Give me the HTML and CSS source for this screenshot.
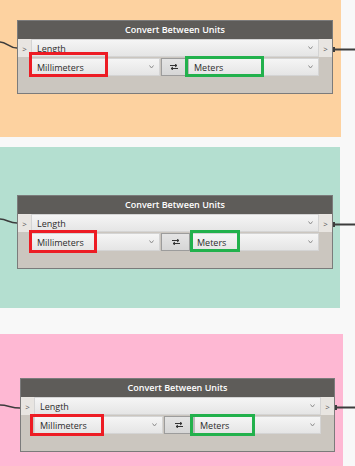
FILE: index.html
```html
<!DOCTYPE html>
<html lang="en">
<head>
    <meta charset="UTF-8">
    <meta name="viewport" content="width=device-width, initial-scale=1.0">
    <title>Convert Between Units</title>
    <link rel="stylesheet" href="styles.css">
</head>
<body>
    <div class="panel panel-orange">
        <div class="canvas">
            <svg class="wire-in" width="17" height="40" viewBox="0 0 17 40"><path d="M0 22 C7 22 9 28 17 28" fill="none" stroke="#3c3c3c" stroke-width="1.6"/></svg>
            <div class="node">
                <div class="node-title">Convert Between Units</div>
                <div class="node-row">
                    <span class="port">&gt;</span>
                    <div class="combo combo-wide"><span>Length</span><svg class="caret" width="5" height="4" viewBox="0 0 5 4"><path d="M0.5 0.5 L2.5 3 L4.5 0.5" fill="none" stroke="#8c8c8c"/></svg></div>
                    <span class="port">&gt;</span>
                </div>
                <div class="node-row units">
                    <div class="combo combo-from"><span>Millimeters</span><svg class="caret" width="5" height="4" viewBox="0 0 5 4"><path d="M0.5 0.5 L2.5 3 L4.5 0.5" fill="none" stroke="#8c8c8c"/></svg></div>
                    <div class="swap"><svg width="8" height="6" viewBox="0 0 8 6"><path d="M0 1.5 H7 M5 0 L7 1.5 L5 3 M8 4.5 H1 M3 3 L1 4.5 L3 6" fill="none" stroke="#333" stroke-width="1"/></svg></div>
                    <div class="combo combo-to"><span>Meters</span><svg class="caret" width="5" height="4" viewBox="0 0 5 4"><path d="M0.5 0.5 L2.5 3 L4.5 0.5" fill="none" stroke="#8c8c8c"/></svg></div>
                </div>
                <span class="mark mark-red m1-red"></span>
                <span class="mark mark-green m1-green"></span>
            </div>
            <svg class="wire-out" width="22" height="40" viewBox="0 0 22 40"><rect x="0" y="27" width="2" height="5" fill="#3c3c3c"/><path d="M0 29.5 H22" stroke="#3c3c3c" stroke-width="2"/></svg>
        </div>
    </div>

    <div class="panel panel-green">
        <div class="canvas">
            <svg class="wire-in" width="17" height="40" viewBox="0 0 17 40"><path d="M0 24 C7 24 9 28 17 28" fill="none" stroke="#3c3c3c" stroke-width="1.6"/></svg>
            <div class="node">
                <div class="node-title">Convert Between Units</div>
                <div class="node-row">
                    <span class="port">&gt;</span>
                    <div class="combo combo-wide"><span>Length</span><svg class="caret" width="5" height="4" viewBox="0 0 5 4"><path d="M0.5 0.5 L2.5 3 L4.5 0.5" fill="none" stroke="#8c8c8c"/></svg></div>
                    <span class="port">&gt;</span>
                </div>
                <div class="node-row units">
                    <div class="combo combo-from"><span>Millimeters</span><svg class="caret" width="5" height="4" viewBox="0 0 5 4"><path d="M0.5 0.5 L2.5 3 L4.5 0.5" fill="none" stroke="#8c8c8c"/></svg></div>
                    <div class="swap swap-wide"><svg width="8" height="6" viewBox="0 0 8 6"><path d="M0 1.5 H7 M5 0 L7 1.5 L5 3 M8 4.5 H1 M3 3 L1 4.5 L3 6" fill="none" stroke="#333" stroke-width="1"/></svg></div>
                    <div class="combo combo-to"><span>Meters</span><svg class="caret" width="5" height="4" viewBox="0 0 5 4"><path d="M0.5 0.5 L2.5 3 L4.5 0.5" fill="none" stroke="#8c8c8c"/></svg></div>
                </div>
                <span class="mark mark-red m2-red"></span>
                <span class="mark mark-green m2-green"></span>
            </div>
            <svg class="wire-out" width="22" height="40" viewBox="0 0 22 40"><rect x="0" y="27" width="2" height="5" fill="#3c3c3c"/><path d="M0 29.5 H22" stroke="#3c3c3c" stroke-width="2"/></svg>
        </div>
    </div>

    <div class="panel panel-pink">
        <div class="canvas">
            <svg class="wire-in wide" width="20" height="40" viewBox="0 0 20 40"><path d="M0 27 C8 27 11 30 20 30" fill="none" stroke="#3c3c3c" stroke-width="1.6"/></svg>
            <div class="node node-narrow">
                <div class="node-title">Convert Between Units</div>
                <div class="node-row">
                    <span class="port">&gt;</span>
                    <div class="combo combo-wide"><span>Length</span><svg class="caret" width="5" height="4" viewBox="0 0 5 4"><path d="M0.5 0.5 L2.5 3 L4.5 0.5" fill="none" stroke="#8c8c8c"/></svg></div>
                    <span class="port">&gt;</span>
                </div>
                <div class="node-row units">
                    <div class="combo combo-from"><span>Millimeters</span><svg class="caret" width="5" height="4" viewBox="0 0 5 4"><path d="M0.5 0.5 L2.5 3 L4.5 0.5" fill="none" stroke="#8c8c8c"/></svg></div>
                    <div class="swap swap-wide"><svg width="8" height="6" viewBox="0 0 8 6"><path d="M0 1.5 H7 M5 0 L7 1.5 L5 3 M8 4.5 H1 M3 3 L1 4.5 L3 6" fill="none" stroke="#333" stroke-width="1"/></svg></div>
                    <div class="combo combo-to"><span>Meters</span><svg class="caret" width="5" height="4" viewBox="0 0 5 4"><path d="M0.5 0.5 L2.5 3 L4.5 0.5" fill="none" stroke="#8c8c8c"/></svg></div>
                </div>
                <span class="mark mark-red m3-red"></span>
                <span class="mark mark-green m3-green"></span>
            </div>
            <svg class="wire-out" width="20" height="40" viewBox="0 0 20 40"><rect x="0" y="27" width="2" height="5" fill="#3c3c3c"/><path d="M0 29.5 H20" stroke="#3c3c3c" stroke-width="2"/></svg>
        </div>
    </div>
</body>
</html>
```

FILE: styles.css
```css
body {
    margin: 0;
    background: #f8f8f8;
    font-family: "Open Sans", "DejaVu Sans", sans-serif;
    overflow: hidden;
}
.panel {
    box-sizing: border-box;
}
.panel-orange {
    width: 341px;
    height: 137px;
    padding-top: 20px;
    margin-bottom: 10px;
    background: #fdd2a0;
}
.panel-green {
    width: 340px;
    height: 161px;
    padding-top: 48px;
    margin-bottom: 26px;
    background: #b4dfd0;
}
.panel-pink {
    width: 343px;
    height: 132px;
    padding-top: 44px;
    background: #feb8d3;
}
.canvas {
    display: flex;
    align-items: flex-start;
    width: 355px;
}
.wire-in, .wire-out {
    flex: none;
    display: block;
}
.node {
    position: relative;
    flex: none;
    box-sizing: border-box;
    width: 316px;
    height: 74px;
    border: 1px solid #7b7b7b;
    background: #cbc6bf;
}
.node-narrow {
    width: 315px;
}
.node-title {
    height: 18px;
    line-height: 18px;
    background: #5e5c59;
    color: #fff;
    font-size: 9px;
    font-weight: 600;
    text-align: center;
}
.node-row {
    display: flex;
    height: 18px;
}
.node-row.units {
    margin-top: 1px;
    padding: 0 13px;
}
.port {
    flex: none;
    width: 13px;
    display: flex;
    align-items: center;
    justify-content: center;
    background: #e8e5e1;
    color: #555;
    font-size: 8px;
}
.combo {
    box-sizing: border-box;
    display: flex;
    align-items: center;
    justify-content: space-between;
    padding: 0 5px 0 5px;
    background: linear-gradient(#f5f5f5, #e5e5e5);
    border: 1px solid #d4d4d4;
    color: #2c2c2c;
    font-size: 9px;
}
.combo-wide {
    flex: 1;
}
.combo-from {
    flex: none;
    width: 129px;
}
.combo-to {
    flex: 1;
    border-left: 2px solid #b9b9b9;
}
.caret {
    flex: none;
}
.swap {
    flex: none;
    box-sizing: border-box;
    width: 26px;
    margin-left: 1px;
    display: flex;
    align-items: center;
    justify-content: center;
    background: linear-gradient(#e4e4e4, #d6d6d6);
    border: 1px solid #9c9c9c;
}
.swap-wide {
    width: 29px;
}
.mark {
    position: absolute;
    box-sizing: border-box;
    border: 3px solid #ed1c24;
}
.mark-green {
    border-color: #22b14c;
}
.m1-red { left: 11px; top: 31px; width: 79px; height: 25px; }
.m1-green { left: 167px; top: 35px; width: 79px; height: 21px; }
.m2-red { left: 11px; top: 34px; width: 68px; height: 23px; }
.m2-green { left: 172px; top: 34px; width: 50px; height: 22px; }
.m3-red { left: 9px; top: 35px; width: 74px; height: 22px; }
.m3-green { left: 169px; top: 35px; width: 65px; height: 22px; }
```
